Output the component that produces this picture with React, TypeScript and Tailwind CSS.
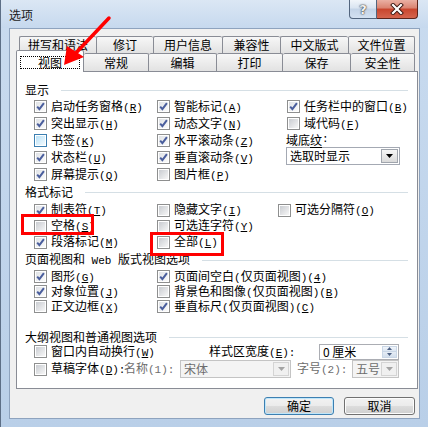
import React from "react";

// small helpers for the SimSun-like half-width bits: "(R)", "(仅页面视图)" ...
const Mono = ({ children }: { children: React.ReactNode }) => (
  <span className="font-['Liberation_Mono',monospace] text-[11px]">{children}</span>
);

const Key = ({ k, colon }: { k: string; colon?: boolean }) => (
  <Mono>
    (<u className="underline-offset-[1px]">{k}</u>){colon ? ":" : ""}
  </Mono>
);

const Box = ({ on, hot }: { on?: boolean; hot?: boolean }) => (
  <span
    className={`relative inline-flex w-[13px] h-[13px] shrink-0 p-px border bg-white ${
      hot ? "border-[#3c7fb1]" : "border-[#8e8f8f]"
    }`}
  >
    <span
      className={`block w-full h-full ${
        hot
          ? "bg-[linear-gradient(135deg,#b9e1f7,#f3fafe)]"
          : on
          ? "bg-[linear-gradient(135deg,#dfe2e6,#fbfbfb)]"
          : "bg-[linear-gradient(135deg,#c9ccd1,#f7f7f7)]"
      }`}
    />
    {on && (
      <svg className="absolute left-0 top-0" width="11" height="11" viewBox="0 0 11 11">
        <path d="M2.2 5.6 L4.4 8.2 L8.9 2.2" fill="none" stroke="#4a5e9d" strokeWidth="2" />
      </svg>
    )}
  </span>
);

const Check = ({
  label,
  k,
  on,
  hot,
  h = "h-[17px]",
}: {
  label: React.ReactNode;
  k: string;
  on?: boolean;
  hot?: boolean;
  h?: string;
}) => (
  <div className={`flex items-center whitespace-nowrap ${h}`}>
    <Box on={on} hot={hot} />
    <span className="ml-[4px]">
      {label}
      <Key k={k} />
    </span>
  </div>
);

const Heading = ({ children, mt = "" }: { children: React.ReactNode; mt?: string }) => (
  <div className={`flex items-center h-[16px] pl-[8px] pr-[9px] whitespace-nowrap ${mt}`}>
    <span>{children}</span>
    <span className="flex-1 h-px ml-[12px] bg-[#d5dfe5]" />
  </div>
);

const Arrow = ({ color }: { color: string }) => (
  <svg width="7" height="4" viewBox="0 0 7 4">
    <path d="M0 0h7L3.5 4z" fill={color} />
  </svg>
);

const Tab = ({ w, children, last }: { w: string; children: string; last?: boolean }) => (
  <div
    className={`${w} h-full flex items-center justify-center border-t border-l border-[#898c95] rounded-t-[2px] bg-[linear-gradient(#f7f7f7,#e2e2e2)] ${
      last ? "border-r" : ""
    }`}
  >
    {children}
  </div>
);

const Tab2 = ({ w, children }: { w: string; children: string }) => (
  <div
    className={`${w} h-full flex items-center justify-center border-t border-r border-[#898c95] rounded-t-[2px] bg-[linear-gradient(#f7f7f7,#e2e2e2)]`}
  >
    {children}
  </div>
);

export default function App() {
  return (
    <div className="relative w-[428px] h-[427px] overflow-hidden bg-[linear-gradient(#c9dbef,#b9cfe8)] border-l border-[#5d6f86] font-['Noto_Sans_CJK_SC',sans-serif] text-[12px] leading-none text-black select-none">
      {/* title bar */}
      <div className="h-[28px] flex justify-between bg-[linear-gradient(#dbe7f4,#c6d9ee)]">
        <div className="pl-[8px] pt-[9px] text-[#1b1b1b]">选项</div>
        <div className="flex h-[19px] mr-[10px]">
          <div className="w-[28px] h-full flex items-center justify-center border border-t-0 border-[#52657e] rounded-bl-[4px] bg-[linear-gradient(#f1f5fa,#d9e4f1_45%,#c3d3e7_50%,#d3e1f1)] font-['DejaVu_Sans',sans-serif] text-[13px] font-bold text-[#f2f2f2] [text-shadow:0_0_1px_#222,0_0_2px_#333]">
            ?
          </div>
          <div className="w-[41px] h-full flex items-center justify-center border border-t-0 border-l-0 border-[#5c241b] rounded-br-[4px] bg-[linear-gradient(#eab0a3,#da8370_45%,#c8452d_50%,#d5654e)]">
            <svg width="14" height="12" viewBox="0 0 14 12">
              <path d="M3 2 L11 10 M11 2 L3 10" stroke="#3a1510" strokeWidth="4" strokeLinecap="square" />
              <path d="M3 2 L11 10 M11 2 L3 10" stroke="#ffffff" strokeWidth="2.2" strokeLinecap="square" />
            </svg>
          </div>
        </div>
      </div>

      {/* dialog client area */}
      <div className="mx-[8px] h-[391px] flex flex-col bg-[#f0f0f0] border border-[#8ea3be]">
        <div className="pt-[7px]">
          <div className="flex h-[17px] pl-[9px]">
            <Tab w="w-[77px]">拼写和语法</Tab>
            <Tab w="w-[57px]">修订</Tab>
            <Tab w="w-[69px]">用户信息</Tab>
            <Tab w="w-[58px]">兼容性</Tab>
            <Tab w="w-[68px]">中文版式</Tab>
            <Tab w="w-[67px]" last>
              文件位置
            </Tab>
          </div>
          <div className="flex items-end h-[18px] pl-[6px]">
            <div className="relative z-10 w-[68px] h-[22px] -mb-px flex justify-center pt-[5px] bg-white border border-b-0 border-[#898c95] rounded-t-[2px]">
              <span className="w-[60px] h-[13px] flex items-center justify-center border border-dotted border-black">
                视图
              </span>
            </div>
            <Tab2 w="w-[65px]">常规</Tab2>
            <Tab2 w="w-[68px]">编辑</Tab2>
            <Tab2 w="w-[66px]">打印</Tab2>
            <Tab2 w="w-[68px]">保存</Tab2>
            <Tab2 w="w-[64px]">安全性</Tab2>
          </div>
        </div>

        {/* tab panel */}
        <div className="ml-[6px] w-[402px] h-[318px] pt-[10px] bg-white border border-[#898c95]">
          <Heading>显示</Heading>
          <div className="flex pl-[17px]">
            <div className="w-[123px]">
              <Check label="启动任务窗格" k="R" on />
              <Check label="突出显示" k="H" on />
              <Check label="书签" k="K" hot />
              <Check label="状态栏" k="U" on />
              <Check label="屏幕提示" k="Q" on />
            </div>
            <div className="w-[130px]">
              <Check label="智能标记" k="A" on />
              <Check label="动态文字" k="N" on />
              <Check label="水平滚动条" k="Z" on />
              <Check label="垂直滚动条" k="V" on />
              <Check label="图片框" k="P" />
            </div>
            <div className="flex-1">
              <Check label="任务栏中的窗口" k="B" on />
              <Check label="域代码" k="F" />
              <div className="h-[15px] -ml-px flex items-center">
                域底<span className="underline underline-offset-[2px]">纹</span>
                <Mono>:</Mono>
              </div>
              <div className="w-[114px] h-[18px] -ml-px flex items-center border border-[#a4a9b3] bg-white">
                <span className="flex-1 pl-[3px]">选取时显示</span>
                <span className="w-[17px] h-[14px] mr-px flex items-center justify-center border border-[#a0a5ad] bg-[linear-gradient(#f6f6f6,#dadada)]">
                  <Arrow color="#000" />
                </span>
              </div>
            </div>
          </div>

          <Heading mt="mt-[1px]">格式标记</Heading>
          <div className="flex pl-[17px] mt-[2px]">
            <div className="w-[123px]">
              <Check label="制表符" k="T" on h="h-[16px]" />
              <Check label="空格" k="S" h="h-[16px]" />
              <Check label="段落标记" k="M" on h="h-[16px]" />
            </div>
            <div className="w-[121px]">
              <Check label="隐藏文字" k="I" h="h-[16px]" />
              <Check label="可选连字符" k="Y" h="h-[16px]" />
              <Check label="全部" k="L" h="h-[16px]" />
            </div>
            <div className="flex-1">
              <Check label="可选分隔符" k="O" h="h-[16px]" />
            </div>
          </div>

          <Heading mt="mt-[2px]">
            页面视图和
            <Mono> Web </Mono>
            版式视图选项
          </Heading>
          <div className="flex pl-[17px] mt-[1px]">
            <div className="w-[123px]">
              <Check label="图形" k="G" on h="h-[15px]" />
              <Check label="对象位置" k="J" on h="h-[15px]" />
              <Check label="正文边框" k="X" h="h-[15px]" />
            </div>
            <div className="flex-1">
              <Check
                label={
                  <>
                    页面间空白<Mono>(</Mono>仅页面视图<Mono>)</Mono>
                  </>
                }
                k="4"
                on
                h="h-[15px]"
              />
              <Check
                label={
                  <>
                    背景色和图像<Mono>(</Mono>仅页面视图<Mono>)</Mono>
                  </>
                }
                k="B"
                h="h-[15px]"
              />
              <Check
                label={
                  <>
                    垂直标尺<Mono>(</Mono>仅页面视图<Mono>)</Mono>
                  </>
                }
                k="C"
                on
                h="h-[15px]"
              />
            </div>
          </div>

          <Heading mt="mt-[15px]">大纲视图和普通视图选项</Heading>
          <div className="pl-[17px] -mt-[2px]">
            <div className="flex items-center h-[17px]">
              <div className="w-[175px]">
                <Check label="窗口内自动换行" k="W" />
              </div>
              <div className="w-[110px] whitespace-nowrap">
                样式区宽度
                <Key k="E" colon />
              </div>
              <div className="w-[80px] h-[16px] flex border border-[#abadb3] bg-white">
                <span className="flex-1 pl-[3px] flex items-center">0 厘米</span>
                <div className="w-[17px] flex flex-col p-px">
                  <span className="flex-1 flex items-center justify-center border border-[#c9d6e6] bg-[linear-gradient(#f2f6fb,#dbe5f1)]">
                    <svg width="5" height="3" viewBox="0 0 5 3">
                      <path d="M0 3h5L2.5 0z" fill="#4d6185" />
                    </svg>
                  </span>
                  <span className="flex-1 flex items-center justify-center border border-t-0 border-[#c9d6e6] bg-[linear-gradient(#e6edf6,#d2deec)]">
                    <svg width="5" height="3" viewBox="0 0 5 3">
                      <path d="M0 0h5L2.5 3z" fill="#4d6185" />
                    </svg>
                  </span>
                </div>
              </div>
            </div>
            <div className="flex items-center h-[18px] whitespace-nowrap">
              <div className="w-[90px] flex items-center">
                <Box />
                <span className="ml-[4px]">
                  草稿字体
                  <Key k="D" colon />
                </span>
              </div>
              <div className="w-[56px] text-[#6d6d6d]">
                名称
                <Mono>(1):</Mono>
              </div>
              <div className="w-[111px] h-[18px] flex items-center border border-[#c4c4c4] bg-[#f4f4f4]">
                <span className="flex-1 pl-[3px] text-[#6d6d6d]">宋体</span>
                <span className="w-[16px] h-[14px] mr-px flex items-center justify-center border border-[#d4d4d4] bg-[#f0f0f0]">
                  <Arrow color="#a3a3a3" />
                </span>
              </div>
              <div className="w-[55px] ml-[6px] text-[#6d6d6d]">
                字号
                <Mono>(2):</Mono>
              </div>
              <div className="w-[47px] h-[18px] flex items-center border border-[#c4c4c4] bg-[#f4f4f4]">
                <span className="flex-1 pl-[3px] text-[#6d6d6d]">五号</span>
                <span className="w-[16px] h-[14px] mr-px flex items-center justify-center border border-[#d4d4d4] bg-[#f0f0f0]">
                  <Arrow color="#a3a3a3" />
                </span>
              </div>
            </div>
          </div>
        </div>

        {/* buttons */}
        <div className="flex justify-end gap-[10px] pr-[4px] mt-[8px]">
          <button className="w-[70px] h-[18px] flex items-center justify-center rounded-[3px] border border-[#3c7fb1] shadow-[inset_0_0_0_1px_#bfe6fa] bg-[linear-gradient(#f2f2f2,#ebebeb_50%,#dddddd_50%,#cfcfcf)]">
            确定
          </button>
          <button className="w-[71px] h-[18px] flex items-center justify-center rounded-[3px] border border-[#707070] shadow-[inset_0_0_0_1px_#fcfcfc] bg-[linear-gradient(#f2f2f2,#ebebeb_50%,#dddddd_50%,#cfcfcf)]">
            取消
          </button>
        </div>
      </div>

      {/* red annotations */}
      <div className="absolute z-20 left-[20px] top-[214px] w-[73px] h-[21px] border-[3px] border-[#ff0000]" />
      <div className="absolute z-20 left-[149px] top-[232px] w-[74px] h-[24px] border-[3px] border-[#ff0000]" />
      <svg className="absolute z-20 left-0 top-0 pointer-events-none" width="428" height="427">
        <line x1="108" y1="18" x2="74" y2="54" stroke="#ff0000" strokeWidth="3.5" strokeLinecap="round" />
        <polygon points="63,65 66,46 83,57" fill="#ff0000" />
      </svg>
    </div>
  );
}
